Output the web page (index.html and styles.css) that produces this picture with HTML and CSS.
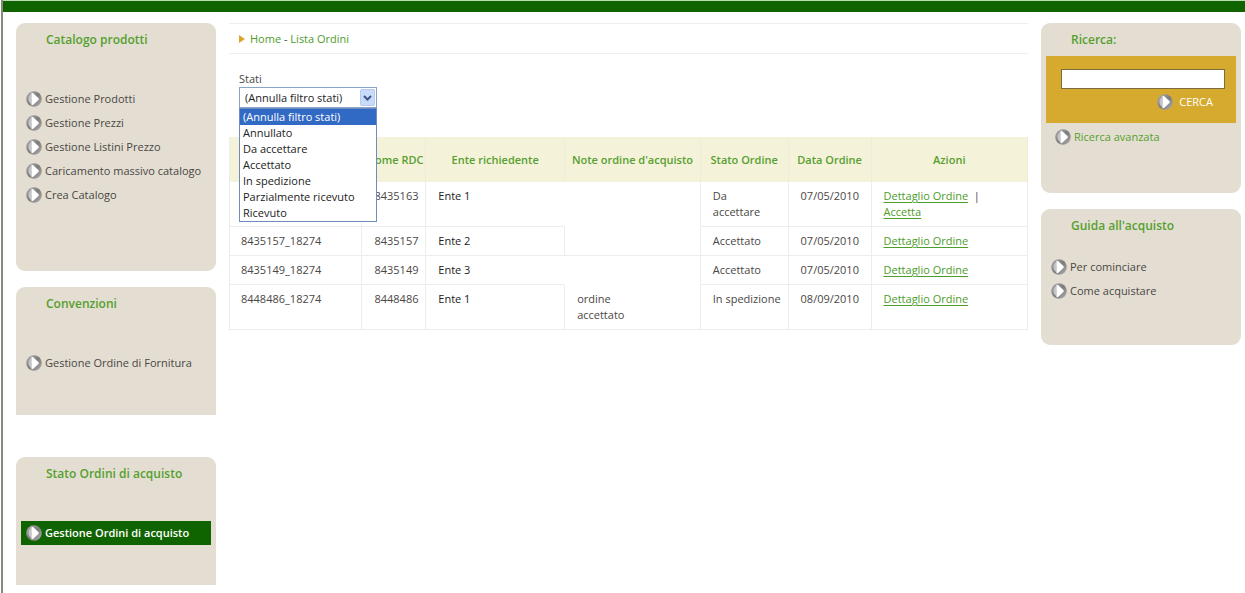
FILE: index.html
```html
<!DOCTYPE html>
<html lang="it">
<head>
<meta charset="utf-8">
<title>Lista Ordini</title>
<link rel="stylesheet" href="styles.css">
</head>
<body>
<svg class="defs" aria-hidden="true">
  <defs>
    <linearGradient id="ring" x1="0" y1="0" x2="1" y2="1">
      <stop offset="0" stop-color="#b4b4b4"/>
      <stop offset="0.5" stop-color="#7c7c7e"/>
      <stop offset="1" stop-color="#b0b0b0"/>
    </linearGradient>
    <symbol id="bullet" viewBox="0 0 16 16">
      <circle cx="8" cy="8" r="7.8" fill="url(#ring)"/>
      <path d="M5.500 2.800A6 6 0 0 0 5.500 13.200Z" fill="#c6c6c8"/>
      <path d="M5.500 1.800Q6.500 1.600 7.500 2.600L12.400 7Q13.300 8 12.400 9L7.500 13.400Q6.500 14.400 5.500 14.200Z" fill="#fff"/>
    </symbol>
  </defs>
</svg>
<div class="page">
  <div class="topbar"></div>
  <div class="columns">
    <nav class="side">
      <section class="panel catalog">
        <h2>Catalogo prodotti</h2>
        <ul>
          <li><a href="#"><svg><use href="#bullet"/></svg>Gestione Prodotti</a></li>
          <li><a href="#"><svg><use href="#bullet"/></svg>Gestione Prezzi</a></li>
          <li><a href="#"><svg><use href="#bullet"/></svg>Gestione Listini Prezzo</a></li>
          <li><a href="#"><svg><use href="#bullet"/></svg>Caricamento massivo catalogo</a></li>
          <li><a href="#"><svg><use href="#bullet"/></svg>Crea Catalogo</a></li>
        </ul>
      </section>
      <section class="panel open-end agreements">
        <h2>Convenzioni</h2>
        <ul>
          <li><a href="#"><svg><use href="#bullet"/></svg>Gestione Ordine di Fornitura</a></li>
        </ul>
      </section>
      <section class="panel open-end orders">
        <h2>Stato Ordini di acquisto</h2>
        <ul>
          <li><a class="current" href="#"><svg><use href="#bullet"/></svg>Gestione Ordini di acquisto</a></li>
        </ul>
      </section>
    </nav>

    <main>
      <div class="breadcrumb">
        <svg viewBox="0 0 6 8"><path d="M0 0 6 4 0 8Z"/></svg>
        <span><a href="#">Home</a> - <a href="#">Lista Ordini</a></span>
      </div>
      <div class="filter">
        <label for="stati">Stati</label>
        <div class="combo">
          <select id="stati">
            <option>(Annulla filtro stati)</option>
            <option>Annullato</option>
            <option>Da accettare</option>
            <option>Accettato</option>
            <option>In spedizione</option>
            <option>Parzialmente ricevuto</option>
            <option>Ricevuto</option>
          </select>
          <span class="arrow"><svg viewBox="0 0 9 6"><path d="M1 1 4.500 4.500 8 1"/></svg></span>
          <ul class="menu" role="listbox" aria-label="Stati">
            <li class="selected" role="option" aria-selected="true">(Annulla filtro stati)</li>
            <li role="option">Annullato</li>
            <li role="option">Da accettare</li>
            <li role="option">Accettato</li>
            <li role="option">In spedizione</li>
            <li role="option">Parzialmente ricevuto</li>
            <li role="option">Ricevuto</li>
          </ul>
        </div>
      </div>
      <table>
        <colgroup>
          <col class="c-order"><col class="c-rdc"><col class="c-body"><col class="c-note"><col class="c-state"><col class="c-date"><col class="c-act">
        </colgroup>
        <thead>
          <tr><th></th><th>Nome RDC</th><th>Ente richiedente</th><th>Note ordine d'acquisto</th><th>Stato Ordine</th><th>Data Ordine</th><th>Azioni</th></tr>
        </thead>
        <tbody>
          <tr><td></td><td>8435163</td><td class="no-right dark">Ente 1</td><td class="no-bottom"></td><td>Da<br>accettare</td><td>07/05/2010</td><td><a href="#">Dettaglio Ordine</a> &nbsp;|<br><a href="#">Accetta</a></td></tr>
          <tr><td>8435157_18274</td><td>8435157</td><td class="dark">Ente 2</td><td></td><td>Accettato</td><td>07/05/2010</td><td><a href="#">Dettaglio Ordine</a></td></tr>
          <tr><td>8435149_18274</td><td>8435149</td><td class="no-right dark">Ente 3</td><td class="no-bottom"></td><td>Accettato</td><td>07/05/2010</td><td><a href="#">Dettaglio Ordine</a></td></tr>
          <tr><td>8448486_18274</td><td>8448486</td><td class="dark">Ente 1</td><td>ordine<br>accettato</td><td>In spedizione</td><td>08/09/2010</td><td><a href="#">Dettaglio Ordine</a></td></tr>
        </tbody>
      </table>
    </main>

    <aside class="side">
      <section class="panel search">
        <h2><label for="q">Ricerca:</label></h2>
        <form>
          <input id="q" type="text">
          <button type="button"><svg><use href="#bullet"/></svg>CERCA</button>
        </form>
        <a class="advanced" href="#"><svg><use href="#bullet"/></svg>Ricerca avanzata</a>
      </section>
      <section class="panel guide">
        <h2>Guida all'acquisto</h2>
        <ul>
          <li><a href="#"><svg><use href="#bullet"/></svg>Per cominciare</a></li>
          <li><a href="#"><svg><use href="#bullet"/></svg>Come acquistare</a></li>
        </ul>
      </section>
    </aside>
  </div>
</div>
</body>
</html>
```
FILE: styles.css
```css
* { box-sizing: border-box; }
body {
  margin: 0;
  background: #fff;
  color: #4a4744;
  font: 11px/16px "Open Sans", "Noto Sans", sans-serif;
}
ul { list-style: none; margin: 0; padding: 0; }
.defs { position: absolute; width: 0; height: 0; }
.page {
  min-height: 100vh;
  margin-left: 1px;
  border-left: 2px solid #858a7c;
}
.topbar {
  height: 12px;
  background: #106400;
  border-top: 1px solid #b9dcb2;
}
.columns {
  display: grid;
  grid-template-columns: 200px 1fr 200px;
  gap: 13px;
  padding: 11px 4px 0 13px;
}

/* side panels */
.side { display: flex; flex-direction: column; gap: 16px; }
.panel {
  background: #e4ded2;
  border-radius: 9px;
  padding: 0 5px 76px;
}
.panel h2 {
  margin: 0 0 30px;
  padding-left: 25px;
  font-size: 12px;
  line-height: 34px;
  font-weight: 600;
  color: #55a02e;
}
.panel li a {
  display: flex;
  align-items: center;
  gap: 3px;
  height: 24px;
  padding-left: 5px;
  color: #4a4744;
  text-decoration: none;
}
.panel svg { width: 16px; height: 16px; flex: none; }
.panel .current { background: #106400; color: #fff; font-weight: 600; }
.catalog { padding-bottom: 64px; }
.open-end { border-radius: 9px 9px 0 0; padding-bottom: 40px; }
.agreements { margin-bottom: 26px; }
.guide { padding-bottom: 42px; }
.guide h2 { margin-bottom: 12px; }

/* search */
.search { padding-bottom: 44px; }
.search h2 { margin-bottom: -1px; }
.search form {
  display: flex;
  flex-direction: column;
  gap: 4px;
  padding: 13px 11px 12px 15px;
  background: #d5aa2e;
}
.search input {
  width: 100%;
  height: 20px;
  border: 1px solid #7c6b3c;
  background: #fff;
  font: inherit;
}
.search button {
  align-self: flex-end;
  display: flex;
  align-items: center;
  gap: 6px;
  height: 18px;
  margin-right: 12px;
  padding: 0;
  border: 0;
  background: none;
  color: #fff;
  font: inherit;
}
.advanced {
  display: flex;
  align-items: center;
  gap: 3px;
  height: 24px;
  margin-top: 2px;
  padding-left: 9px;
  color: #55a02e;
  text-decoration: none;
}

/* main column */
main a { color: #4e9c2a; }
.breadcrumb {
  display: flex;
  align-items: center;
  gap: 5px;
  height: 31px;
  padding-left: 10px;
  border: solid #efefec;
  border-width: 1px 0;
}
.breadcrumb a { text-decoration: none; }
.breadcrumb svg { width: 6px; height: 8px; fill: #d9a62e; }
.filter { padding: 17px 10px 29px; }
.filter label { display: block; }
.combo { position: relative; width: 138px; color: #222; }
.combo select {
  display: block;
  appearance: none;
  width: 100%;
  height: 21px;
  padding: 0 20px 0 5px;
  border: 1px solid #8aa5cc;
  border-radius: 0;
  background: #fff;
  color: inherit;
  font: inherit;
}
.arrow {
  position: absolute;
  top: 2px;
  right: 2px;
  display: grid;
  place-items: center;
  width: 15px;
  height: 17px;
  border: 1px solid #b3cbf5;
  border-radius: 2px;
  background: #c9dafb;
  pointer-events: none;
}
.arrow svg { width: 9px; height: 6px; fill: none; stroke: #3c5683; stroke-width: 2; }
.menu {
  position: absolute;
  top: 100%;
  left: 0;
  width: 100%;
  background: #fff;
  border: 1px solid #6f8cba;
}
.menu li { padding-left: 3px; }
.menu .selected { background: #316ac5; color: #fff; }

table {
  width: 100%;
  table-layout: fixed;
  border-collapse: separate;
  border-spacing: 0;
  border-left: 1px solid #ededea;
}
.c-order { width: 16.6%; }
.c-rdc { width: 8%; }
.c-body { width: 17.4%; }
.c-note { width: 17%; }
.c-state { width: 11%; }
.c-date { width: 10.4%; }
.c-act { width: 19.6%; }
th {
  height: 45px;
  padding: 0 4px;
  background: #f5f2da;
  border-right: 1px solid #efecd8;
  color: #55a02e;
  font-weight: 600;
  white-space: nowrap;
}
td {
  padding: 6px 0 6px 12px;
  border: solid #ededea;
  border-width: 0 1px 1px 0;
  vertical-align: top;
  white-space: nowrap;
}
td:first-child { padding-left: 11px; }
.dark { color: #222; }
.no-right { border-right-color: transparent; }
.no-bottom { border-bottom-color: transparent; }
td a { text-underline-offset: 2px; }
```
